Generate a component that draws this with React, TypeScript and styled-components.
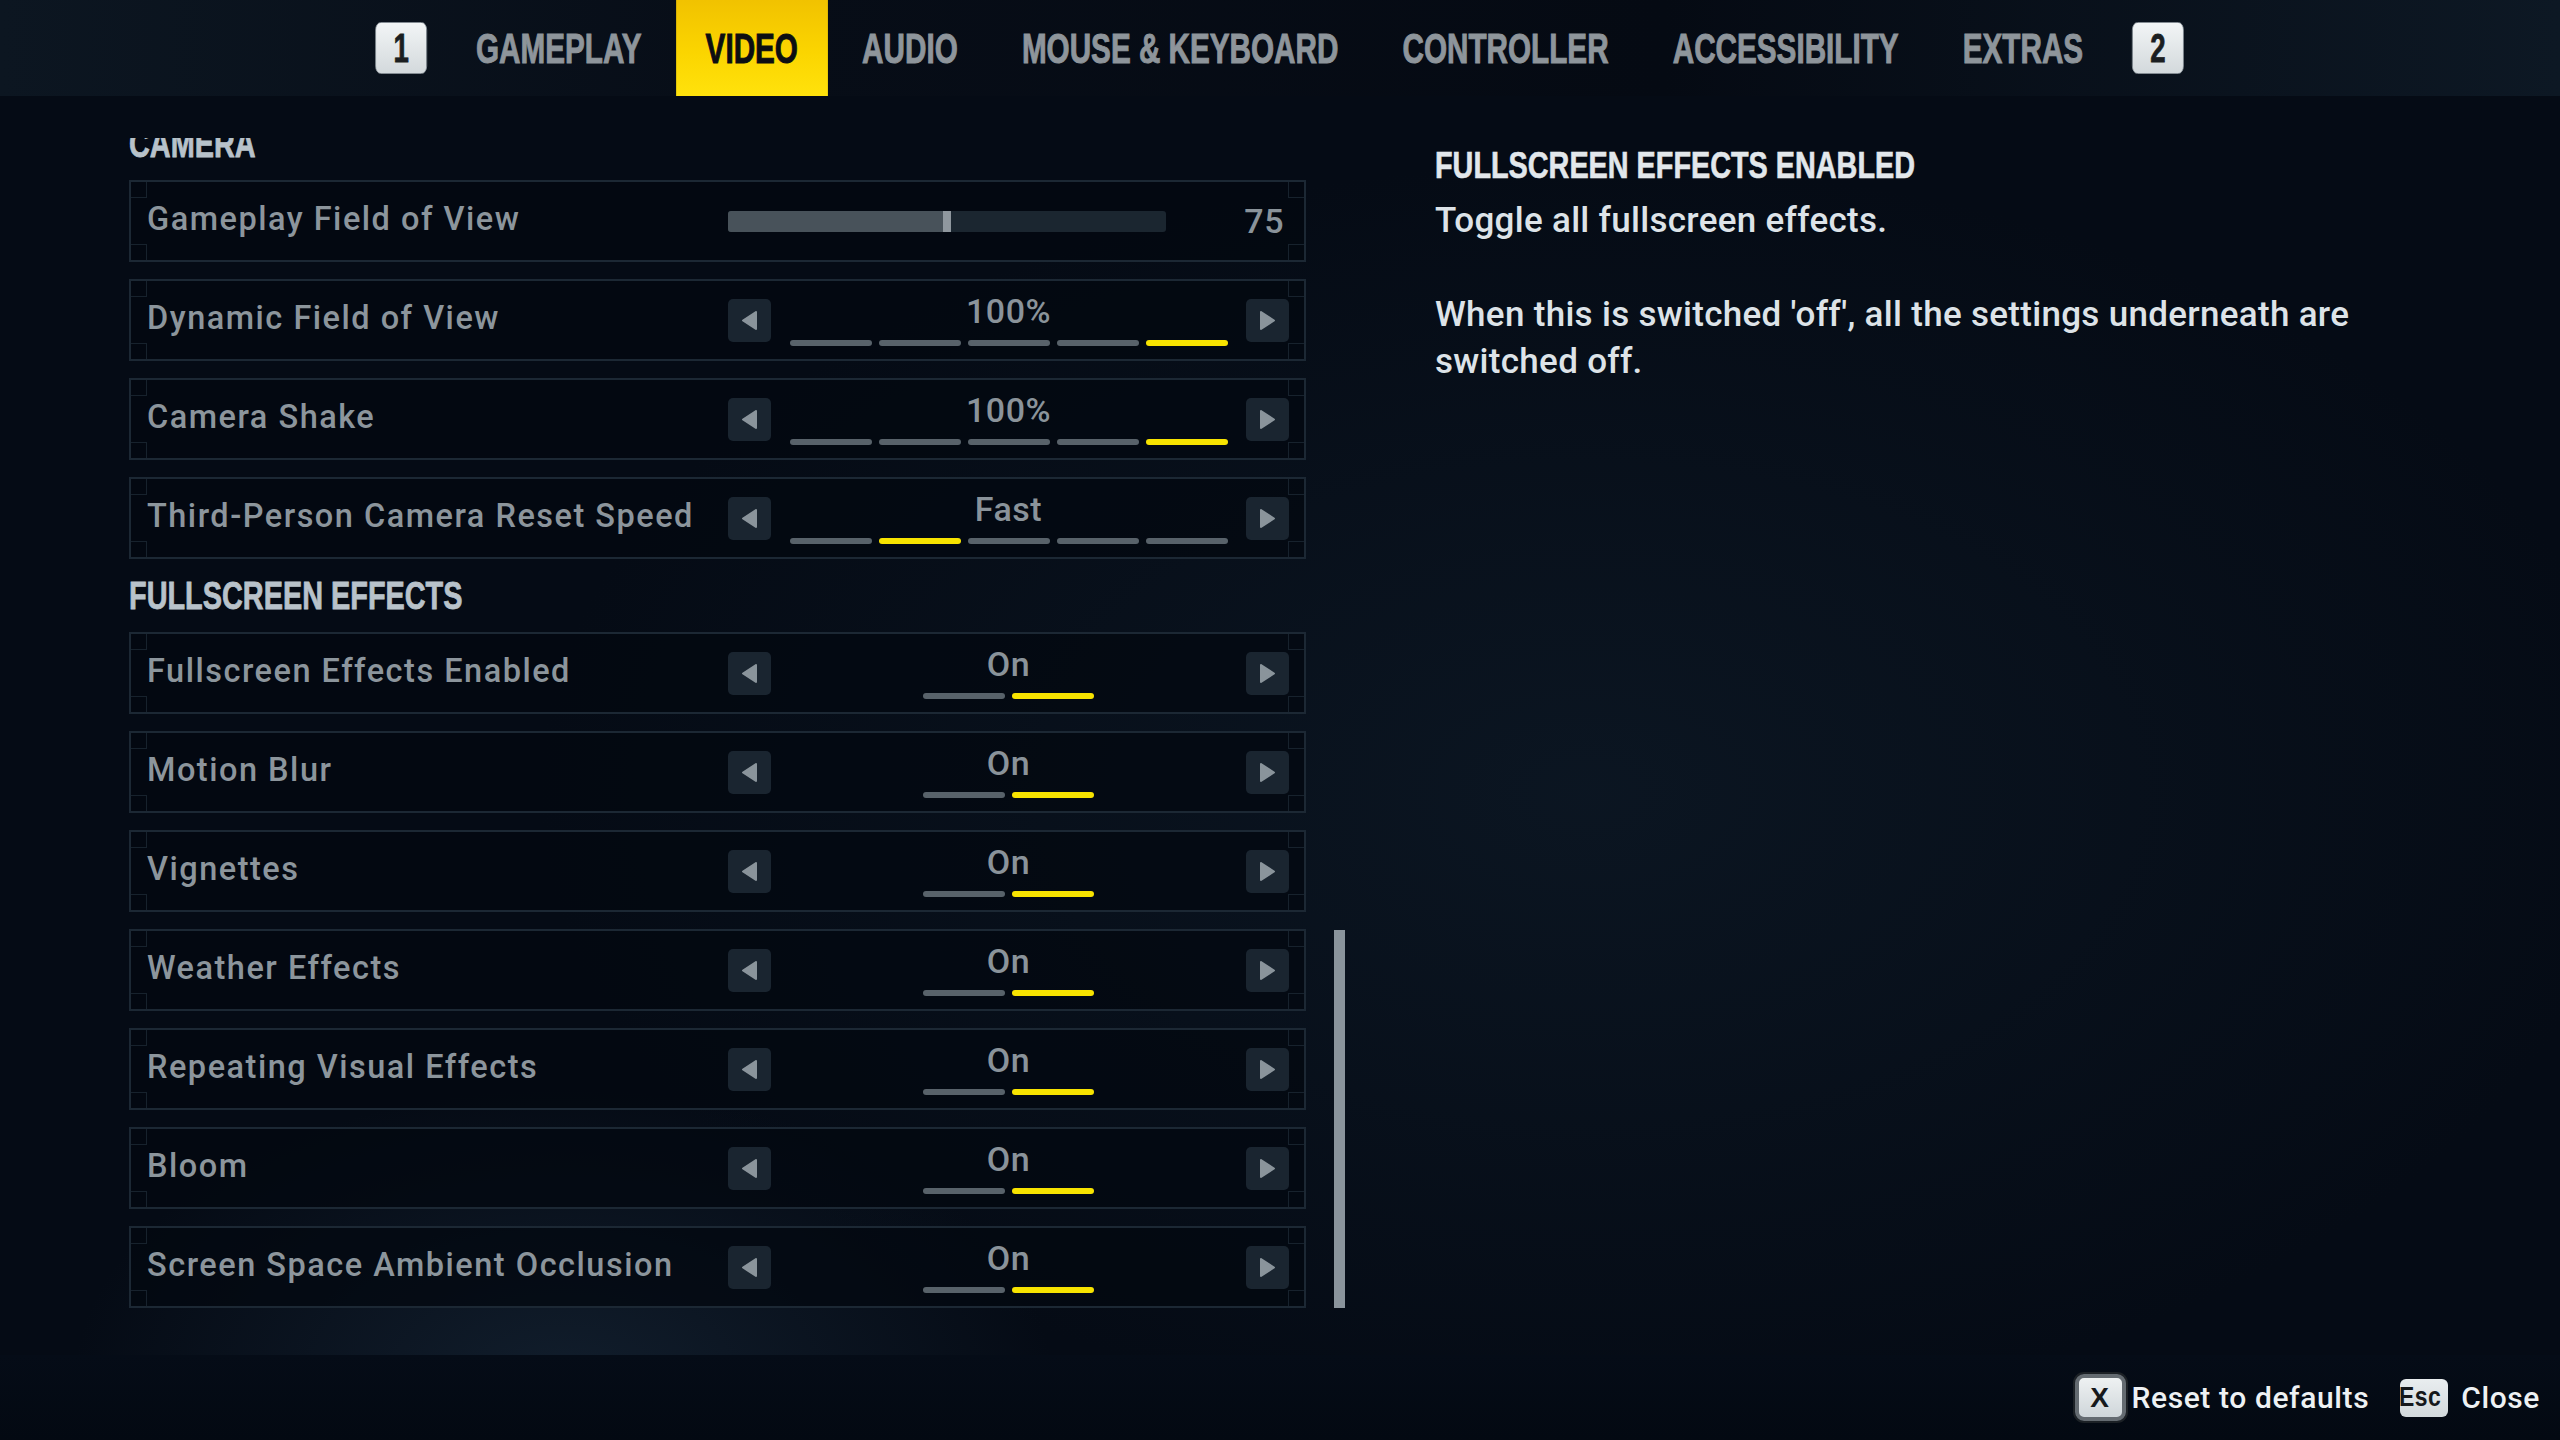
import React from 'react'
import styled, {createGlobalStyle} from 'styled-components'

const GlobalStyle = createGlobalStyle`
  html, body {
    margin: 0;
    padding: 0;
    background: #050b15;
  }
  body {
    font-family: Roboto, "Liberation Sans", sans-serif;
  }
`;

const Screen = styled.div`
  width: 2560px;
  height: 1440px;
  overflow: hidden;
  display: flex;
  flex-direction: column;
  background:
    radial-gradient(ellipse 700px 420px at 22% 96%, rgba(32, 52, 72, 0.45), transparent 70%),
    radial-gradient(ellipse 1500px 900px at 62% 55%, rgba(16, 30, 44, 0.55), transparent 70%),
    #050b15;
`;

const TopBar = styled.div`
  height: 96px;
  flex-shrink: 0;
  display: flex;
  justify-content: center;
  background: linear-gradient(90deg, #0c1621 0%, #070d17 30%, #050a13 65%, #0d1824 100%);
`;

// the game font is much narrower than anything installed, so the whole row is squeezed
const Nav = styled.nav`
  flex-shrink: 0;
  display: flex;
  align-items: center;
  gap: 7px;
  height: 100%;
  transform: scaleX(0.69);
`;

const Tab = styled.div<{ $active?: boolean }>`
  height: 96px;
  padding: 0 43px;
  display: flex;
  align-items: center;
  white-space: nowrap;
  font-family: "Liberation Sans", Arial, sans-serif;
  font-weight: 700;
  font-size: 43px;
  -webkit-text-stroke: 1px ${p => (p.$active ? '#0c0e12' : '#8e959b')};
  color: ${p => (p.$active ? '#0c0e12' : '#8e959b')};
  background: ${p => (p.$active ? 'linear-gradient(180deg, #f1c200 0%, #fbd500 55%, #ffe20c 100%)' : 'transparent')};
`;

const NavKey = styled.div`
  width: 75px;
  height: 52px;
  margin: 0 21px;
  box-sizing: border-box;
  border: 1px solid #9aa3a8;
  border-radius: 8px;
  background: linear-gradient(180deg, #f2f5f6 0%, #d3d9dc 100%);
  display: flex;
  align-items: center;
  justify-content: center;
  font-family: "Liberation Sans", Arial, sans-serif;
  font-weight: 700;
  font-size: 40px;
  -webkit-text-stroke: 0.8px #1b1e21;
  color: #1b1e21;
`;

const Condensed = styled.span<{ $scale: number }>`
  display: inline-block;
  white-space: nowrap;
  transform: scaleX(${p => p.$scale});
  transform-origin: left center;
`;

const Main = styled.div`
  flex: 1;
  display: flex;
  align-items: flex-start;
  padding-top: 42px;
`;

const ListArea = styled.div`
  display: flex;
  gap: 28px;
  margin-left: 129px;
`;

const ListViewport = styled.div`
  width: 1177px;
  height: 1170px;
  overflow: hidden;
`;

const ListContent = styled.div`
  margin-top: -14px;
  display: flex;
  flex-direction: column;
  gap: 17px;
`;

const ScrollTrack = styled.div`
  width: 11px;
  height: 1170px;
  display: flex;
  flex-direction: column;
  justify-content: flex-end;
`;

const ScrollThumb = styled.div`
  height: 378px;
  background: #8a949c;
`;

const SectionHeading = styled.div`
  height: 39px;
  font-family: "Liberation Sans", Arial, sans-serif;
  font-weight: 700;
  font-size: 39px;
  line-height: 39px;
  color: #b8c2ca;
  -webkit-text-stroke: 0.8px #b8c2ca;
`;

const Row = styled.div`
  position: relative;
  height: 82px;
  box-sizing: border-box;
  border: 2px solid #1c2834;
  background: rgba(3, 8, 16, 0.75);
  display: flex;
  align-items: center;
  padding: 0 15px 0 16px;
`;

const Corner = styled.span<{ $top?: boolean; $left?: boolean }>`
  position: absolute;
  width: 15px;
  height: 15px;
  ${p => (p.$top ? 'top: 0;' : 'bottom: 0;')}
  ${p => (p.$left ? 'left: 0;' : 'right: 0;')}
  ${p => (p.$top ? 'border-bottom' : 'border-top')}: 1px solid #17222d;
  ${p => (p.$left ? 'border-right' : 'border-left')}: 1px solid #17222d;
`;

const Label = styled.div`
  flex: 1;
  font-size: 32.5px;
  font-weight: 500;
  letter-spacing: 1.5px;
  color: #8c959c;
  padding-bottom: 5px;
  white-space: nowrap;
`;

const Control = styled.div`
  width: 561px;
  display: flex;
  align-items: center;
`;

const SliderTrack = styled.div`
  width: 438px;
  height: 21px;
  border-radius: 3px;
  overflow: hidden;
  background: #1b2630;
  display: flex;
`;

const SliderFill = styled.div`
  background: #48525a;
`;

const SliderThumb = styled.div`
  width: 8px;
  background: #8f979e;
`;

const SliderValue = styled.div`
  flex: 1;
  text-align: right;
  padding-right: 5px;
  font-size: 34px;
  font-weight: 500;
  letter-spacing: 0.5px;
  color: #8a939a;
`;

const ArrowButton = styled.div`
  width: 43px;
  height: 43px;
  border-radius: 5px;
  background: #1a2530;
  display: flex;
  align-items: center;
  justify-content: center;
`;

const StepperCenter = styled.div`
  flex: 1;
  display: flex;
  flex-direction: column;
  align-items: center;
`;

const StepperValue = styled.div`
  font-size: 34px;
  font-weight: 500;
  line-height: 34px;
  letter-spacing: 0.5px;
  color: #8a939a;
  margin-bottom: 12px;
`;

const Segments = styled.div`
  display: flex;
  gap: 7px;
`;

const Segment = styled.div<{ $on: boolean }>`
  width: 82px;
  height: 6px;
  border-radius: 3px;
  background: ${p => (p.$on ? '#f7e300' : '#58626a')};
`;

const Details = styled.div`
  margin-left: 90px;
  margin-top: 8px;
  width: 980px;
`;

const DetailsTitle = styled.div`
  font-family: "Liberation Sans", Arial, sans-serif;
  font-weight: 700;
  font-size: 36px;
  line-height: 40px;
  color: #e2e7eb;
  -webkit-text-stroke: 0.6px #e2e7eb;
  margin-bottom: 11px;
`;

const DetailsText = styled.p<{ $spaced?: boolean }>`
  margin: ${p => (p.$spaced ? '47px 0 0' : '0')};
  font-size: 35px;
  font-weight: 500;
  line-height: 47px;
  letter-spacing: 0.3px;
  color: #dde3e8;
`;

const Footer = styled.div`
  height: 85px;
  flex-shrink: 0;
  display: flex;
  justify-content: flex-end;
  align-items: center;
  gap: 31px;
  padding-right: 20px;
  background: linear-gradient(180deg, #050c17 0%, #030912 100%);
`;

const FooterItem = styled.div<{ $gap: number }>`
  display: flex;
  align-items: center;
  gap: ${p => p.$gap}px;
  font-size: 30px;
  font-weight: 500;
  letter-spacing: 0.6px;
  color: #eef1f3;
`;

const ResetKey = styled.div`
  width: 51px;
  height: 47px;
  box-sizing: border-box;
  border: 4px solid #646b71;
  border-radius: 9px;
  box-shadow: 0 0 0 2px #1c2126;
  background: linear-gradient(180deg, #eef1f2 0%, #cfd6da 100%);
  display: flex;
  align-items: center;
  justify-content: center;
  font-family: "Liberation Sans", sans-serif;
  font-weight: 700;
  font-size: 28px;
  color: #16191c;
`;

const EscKey = styled.div`
  width: 48px;
  height: 38px;
  border-radius: 6px;
  background: linear-gradient(180deg, #e9edef 0%, #d2d9dc 100%);
  display: flex;
  align-items: center;
  justify-content: center;
  overflow: hidden;
  font-family: "Liberation Sans", sans-serif;
  font-weight: 700;
  font-size: 27px;
  color: #15181b;
`;

type Setting =
    | { kind: 'heading'; title: string }
    | { kind: 'slider'; label: string; value: number; ratio: number }
    | { kind: 'stepper'; label: string; value: string; count: number; index: number };

const settings: Setting[] = [
    {kind: 'heading', title: 'CAMERA'},
    {kind: 'slider', label: 'Gameplay Field of View', value: 75, ratio: 0.49},
    {kind: 'stepper', label: 'Dynamic Field of View', value: '100%', count: 5, index: 4},
    {kind: 'stepper', label: 'Camera Shake', value: '100%', count: 5, index: 4},
    {kind: 'stepper', label: 'Third-Person Camera Reset Speed', value: 'Fast', count: 5, index: 1},
    {kind: 'heading', title: 'FULLSCREEN EFFECTS'},
    {kind: 'stepper', label: 'Fullscreen Effects Enabled', value: 'On', count: 2, index: 1},
    {kind: 'stepper', label: 'Motion Blur', value: 'On', count: 2, index: 1},
    {kind: 'stepper', label: 'Vignettes', value: 'On', count: 2, index: 1},
    {kind: 'stepper', label: 'Weather Effects', value: 'On', count: 2, index: 1},
    {kind: 'stepper', label: 'Repeating Visual Effects', value: 'On', count: 2, index: 1},
    {kind: 'stepper', label: 'Bloom', value: 'On', count: 2, index: 1},
    {kind: 'stepper', label: 'Screen Space Ambient Occlusion', value: 'On', count: 2, index: 1},
];

const tabs = ['GAMEPLAY', 'VIDEO', 'AUDIO', 'MOUSE & KEYBOARD', 'CONTROLLER', 'ACCESSIBILITY', 'EXTRAS'];

const Arrow = ({dir}: { dir: 'left' | 'right' }) => (
    <svg width="15" height="19" viewBox="0 0 15 19">
        <polygon points={dir === 'left' ? '14,1 14,18 1,9.5' : '1,1 1,18 14,9.5'} fill="#8a949b"
                 strokeLinejoin="round" stroke="#8a949b" strokeWidth="2"/>
    </svg>
);

const Corners = () => (
    <>
        <Corner $top $left/>
        <Corner $top/>
        <Corner $left/>
        <Corner/>
    </>
);

const SettingRow = ({setting}: { setting: Setting }) => {
    if (setting.kind === 'heading') {
        return (
            <SectionHeading>
                <Condensed $scale={0.74}>{setting.title}</Condensed>
            </SectionHeading>
        );
    }
    return (
        <Row>
            <Corners/>
            <Label>{setting.label}</Label>
            {setting.kind === 'slider' ? (
                <Control>
                    <SliderTrack>
                        <SliderFill style={{width: Math.round(setting.ratio * 438)}}/>
                        <SliderThumb/>
                    </SliderTrack>
                    <SliderValue>{setting.value}</SliderValue>
                </Control>
            ) : (
                <Control>
                    <ArrowButton><Arrow dir="left"/></ArrowButton>
                    <StepperCenter>
                        <StepperValue>{setting.value}</StepperValue>
                        <Segments>
                            {Array.from({length: setting.count}).map((_, i) => (
                                <Segment key={i} $on={i === setting.index}/>
                            ))}
                        </Segments>
                    </StepperCenter>
                    <ArrowButton><Arrow dir="right"/></ArrowButton>
                </Control>
            )}
        </Row>
    );
};

const App: React.FunctionComponent = () => {
    return (
        <>
            <GlobalStyle/>
            <Screen>
                <TopBar>
                    <Nav>
                        <NavKey>1</NavKey>
                        {tabs.map(t => (
                            <Tab key={t} $active={t === 'VIDEO'}>{t}</Tab>
                        ))}
                        <NavKey>2</NavKey>
                    </Nav>
                </TopBar>
                <Main>
                    <ListArea>
                        <ListViewport>
                            <ListContent>
                                {settings.map((s, i) => (
                                    <SettingRow key={i} setting={s}/>
                                ))}
                            </ListContent>
                        </ListViewport>
                        <ScrollTrack>
                            <ScrollThumb/>
                        </ScrollTrack>
                    </ListArea>
                    <Details>
                        <DetailsTitle>
                            <Condensed $scale={0.8}>FULLSCREEN EFFECTS ENABLED</Condensed>
                        </DetailsTitle>
                        <DetailsText>Toggle all fullscreen effects.</DetailsText>
                        <DetailsText $spaced>
                            When this is switched 'off', all the settings underneath are switched off.
                        </DetailsText>
                    </Details>
                </Main>
                <Footer>
                    <FooterItem $gap={6}>
                        <ResetKey>X</ResetKey>
                        Reset to defaults
                    </FooterItem>
                    <FooterItem $gap={13}>
                        <EscKey>
                            <Condensed $scale={0.85}>Esc</Condensed>
                        </EscKey>
                        Close
                    </FooterItem>
                </Footer>
            </Screen>
        </>
    );
};

export default App;
